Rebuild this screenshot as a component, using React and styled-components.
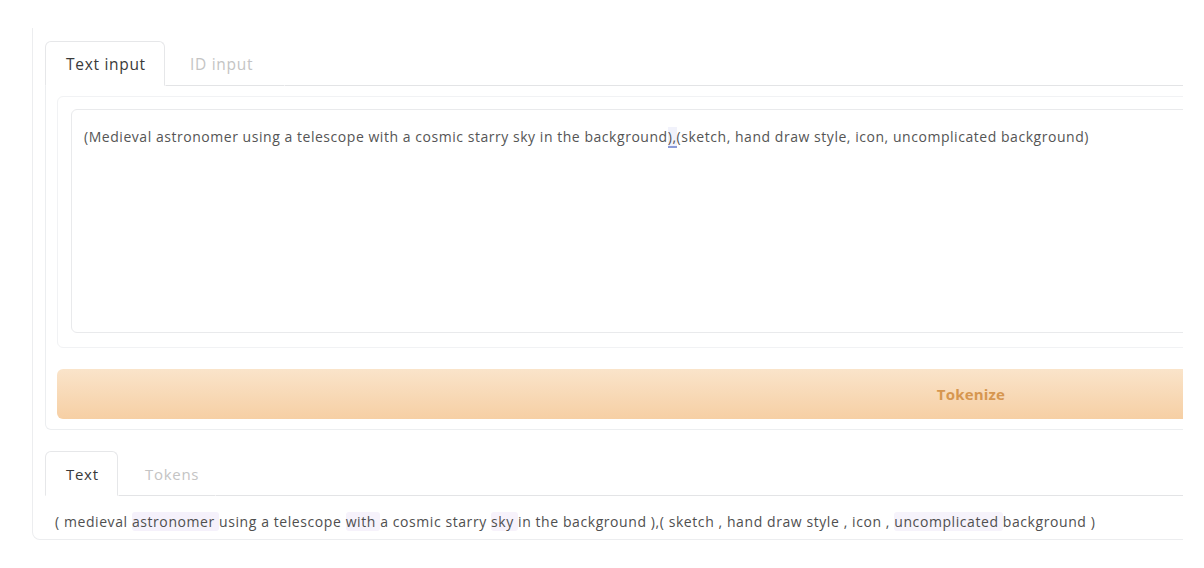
import React from "react";
import styled, { createGlobalStyle } from "styled-components";

const GlobalStyle = createGlobalStyle`
  body {
    margin: 0;
    background: #ffffff;
    font-family: "Open Sans", "Lato", sans-serif;
  }
`;

const promptText =
  "(Medieval astronomer using a telescope with a cosmic starry sky in the background";
const promptTail = "(sketch, hand draw style, icon, uncomplicated background)";

const tokens = [
  ["( ", null],
  ["medieval ", null],
  ["astronomer ", "#f5f1fb"],
  ["using a telescope ", null],
  ["with ", "#f6f2fb"],
  ["a cosmic starry ", null],
  ["sky ", "#f7f2fb"],
  ["in the background ),( sketch , hand draw style , icon , ", null],
  ["uncomplicated ", "#f6f3fb"],
  ["background )", null],
];

const App = () => {
  return (
    <>
      <GlobalStyle />
      <Viewport>
        <Outer>
          <TabsPanel>
            <TabRow>
              <Tab $active>Text input</Tab>
              <Tab>ID input</Tab>
              <TabLine />
            </TabRow>
            <TabBody>
              <InputBlock>
                <TextBox>
                  {promptText}
                  <Marked>),</Marked>
                  {promptTail}
                </TextBox>
              </InputBlock>
              <TokenizeButton>Tokenize</TokenizeButton>
            </TabBody>
          </TabsPanel>
          <ResultPanel>
            <TabRow>
              <Tab $active $small>Text</Tab>
              <Tab $small>Tokens</Tab>
              <TabLine />
            </TabRow>
            <TokenLine>
              {tokens.map(([word, bg], i) =>
                bg ? (
                  <Token key={i} $bg={bg}>
                    {word}
                  </Token>
                ) : (
                  <span key={i}>{word}</span>
                )
              )}
            </TokenLine>
          </ResultPanel>
        </Outer>
      </Viewport>
    </>
  );
};

const Viewport = styled.div`
  width: 1183px;
  height: 568px;
  overflow: hidden;
  padding-top: 28px;
  box-sizing: border-box;
`;

const Outer = styled.div`
  margin-left: 32px;
  width: 1878px;
  height: 512px;
  box-sizing: border-box;
  border: 1px solid #ecedef;
  border-top: none;
  border-radius: 0 0 8px 8px;
  padding: 13px 12px 0 12px;
  display: flex;
  flex-direction: column;
`;

const TabsPanel = styled.div`
  display: flex;
  flex-direction: column;
`;

const TabRow = styled.div`
  display: flex;
  align-items: flex-end;
  height: 45px;
`;

const Tab = styled.div`
  height: 100%;
  box-sizing: border-box;
  display: flex;
  align-items: center;
  padding: 0 16px 0 ${(p) => (p.$active ? "20px" : p.$small ? "26px" : "24px")};
  font-size: ${(p) => (p.$small ? "15px" : "15.5px")};
  letter-spacing: 0.7px;
  color: ${(p) => (p.$active ? "#3a3a3a" : "#c4c4c4")};
  border: 1px solid ${(p) => (p.$active ? "#e6e7e9" : "transparent")};
  border-bottom: 1px solid ${(p) => (p.$active ? "#ffffff" : "#e3e4e6")};
  border-radius: 6px 6px 0 0;
  min-width: ${(p) => (p.$small ? "73px" : "120px")};
`;

const TabLine = styled.div`
  flex: 1;
  border-bottom: 1px solid #e3e4e6;
`;

const TabBody = styled.div`
  border: 1px solid #eceef0;
  border-top: none;
  border-radius: 0 0 6px 6px;
  padding: 10px 11px 10px 11px;
  display: flex;
  flex-direction: column;
  gap: 21px;
`;

const InputBlock = styled.div`
  border: 1px solid #f1f2f4;
  border-radius: 6px;
  padding: 12px 12px 14px 13px;
`;

const TextBox = styled.div`
  height: 224px;
  box-sizing: border-box;
  border: 1px solid #e9eaec;
  border-radius: 6px;
  padding: 18px 12px;
  font-size: 14px;
  letter-spacing: 0.54px;
  line-height: 18px;
  color: #555555;
  white-space: nowrap;
  background: #ffffff;
`;

const Marked = styled.span`
  border-bottom: 2px solid #8a9ad8;
  background: #f1f2fb;
`;

const TokenizeButton = styled.div`
  height: 50px;
  border-radius: 6px;
  background: linear-gradient(to bottom, #fae4ca, #f6cfa4);
  display: flex;
  align-items: center;
  justify-content: center;
  font-size: 15px;
  font-weight: 700;
  letter-spacing: 0.2px;
  color: #d6964f;
`;

const ResultPanel = styled.div`
  margin-top: 21px;
  display: flex;
  flex-direction: column;
`;

const TokenLine = styled.div`
  padding: 17px 0 0 10px;
  font-size: 14px;
  letter-spacing: 0.58px;
  line-height: 18px;
  color: #4f4f4f;
  white-space: nowrap;
`;

const Token = styled.span`
  background: ${(p) => p.$bg};
  border-radius: 3px;
`;

export default App;
